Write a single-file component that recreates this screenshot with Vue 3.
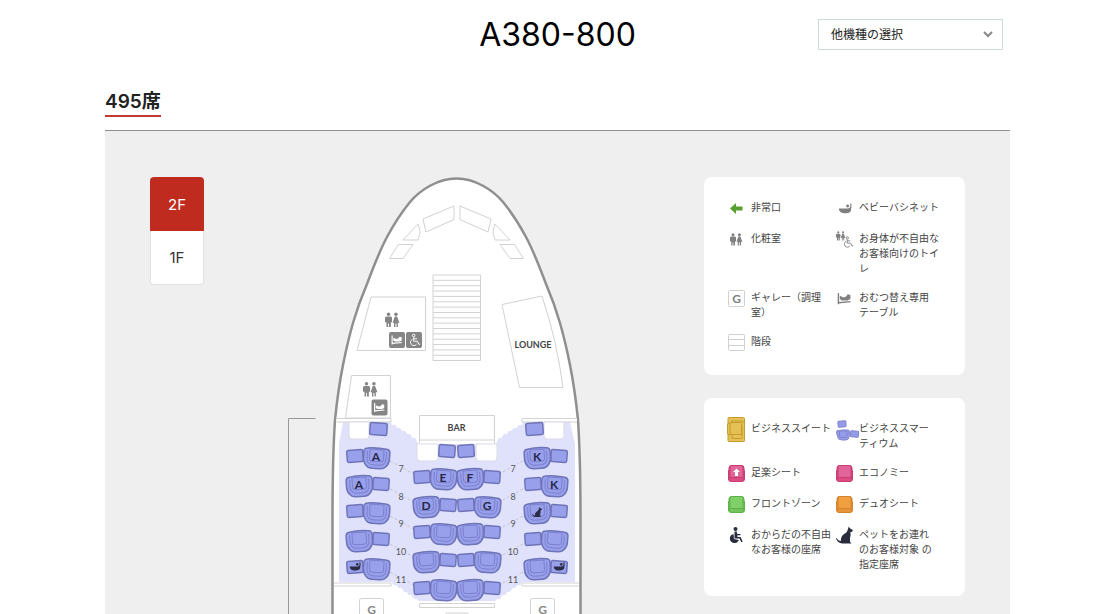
<script setup>
import { ref } from 'vue'

const floor = ref('2F')
const floors = ['2F', '1F']
const aircraft = ref('')

const facilities = [
  { icon: 'exit', label: '非常口' },
  { icon: 'bassinet', label: 'ベビーバシネット' },
  { icon: 'toilet', label: '化粧室' },
  { icon: 'toilet-access', label: 'お身体が不自由な\nお客様向けのトイ\nレ' },
  { icon: 'galley', label: 'ギャレー（調理\n室）' },
  { icon: 'changing', label: 'おむつ替え専用\nテーブル' },
  { icon: 'stairs', label: '階段' }
]

const seatTypes = [
  { icon: 'suite', label: 'ビジネススイート' },
  { icon: 'smartium', label: 'ビジネススマー\nティウム' },
  { icon: 'seat', color: 'pink', arrow: true, label: '足楽シート' },
  { icon: 'seat', color: 'pink', label: 'エコノミー' },
  { icon: 'seat', color: 'green', label: 'フロントゾーン' },
  { icon: 'seat', color: 'orange', label: 'デュオシート' },
  { icon: 'wheelchair', label: 'おからだの不自由\nなお客様の座席' },
  { icon: 'dog', label: 'ペットをお連れ\nのお客様対象 の\n指定座席' }
]

// x / y of the pair, big = which side the wide seat is on
const columns = [
  { x: 346, y: 447, big: 'right', letters: ['A', 'A'] },
  { x: 413, y: 468, big: 'right', letters: ['E', 'D'] },
  { x: 457, y: 468, big: 'left', letters: ['F', 'G'] },
  { x: 524, y: 447, big: 'left', letters: ['K', 'K'] }
]
const rows = [7, 8, 9, 10, 11]
const rowOffset = [0, 28, 55, 83, 111]

const pairs = []
columns.forEach((col, c) => {
  rows.forEach((row, i) => {
    const bigRight = (col.big === 'right') === (i % 2 === 0)
    pairs.push({
      key: `${c}-${row}`,
      x: col.x,
      y: col.y + rowOffset[i],
      bigRight,
      letter: col.letters[i] || '',
      dog: c === 3 && row === 9,
      bassinet: (c === 0 || c === 3) && row === 11
    })
  })
})

const bigTransform = (p) =>
  p.bigRight ? `translate(${p.x + 17} ${p.y}) rotate(4 13 11)` : `translate(${p.x} ${p.y}) rotate(-4 13 11)`
const smallTransform = (p) =>
  p.bigRight ? `translate(${p.x + 1} ${p.y + 3}) rotate(-4 8 6)` : `translate(${p.x + 27} ${p.y + 3}) rotate(4 8 6)`
const centerX = (p) => (p.bigRight ? p.x + 30 : p.x + 13)
</script>

<template>
  <div class="page">
    <header class="header">
      <h1>A380-800</h1>
      <div class="select-bloc">
        <select v-model="aircraft" aria-label="他機種の選択">
          <option value="">他機種の選択</option>
          <option value="a350">A350-900</option>
        </select>
        <svg class="chevron" viewBox="0 0 10 7"><path d="M1 1l4 4 4-4" /></svg>
      </div>
    </header>

    <h2>495席</h2>

    <main class="panel">
      <div class="floors">
        <button v-for="f in floors" :key="f" type="button" :class="{ active: f === floor }" @click="floor = f">
          {{ f }}
        </button>
      </div>

      <svg class="plane" viewBox="204 177 500 437">
        <defs>
          <symbol id="i-people" viewBox="0 0 16 16" overflow="visible">
            <circle cx="4" cy="1.500" r="2" />
            <path d="M2 4h4q2 0 2 1.700v5H6.700V16H4.500v-4h-1v4H1.700v-5.300H0v-5Q0 4 2 4z" />
            <circle cx="12.500" cy="1.500" r="2" />
            <path d="M11.200 4h2.600l2.700 7h-1.800v5h-1.600v-4h-1.200v4h-1.600v-5H8.600z" />
          </symbol>
          <symbol id="i-table" viewBox="0 0 16 16" overflow="visible">
            <path d="M1.500 2v12M1.500 12.500l13-1.200" fill="none" stroke="currentColor" stroke-width="1.500" />
            <path d="M3 5l4 1.800 2.500-.8 2-2.500 2.800.8v4.200l-3 1.500H5l-2-1.500z" />
          </symbol>
          <symbol id="i-wheel" viewBox="0 0 16 16" overflow="visible">
            <g fill="none" stroke="currentColor" stroke-width="1.200">
              <circle cx="7" cy="2.500" r="1.600" />
              <path d="M7 4.500v5h4.500l2 4 1.500-.6M7 6.500h4M5.500 7.200a4 4 0 1 0 5 5.800" />
            </g>
          </symbol>
          <symbol id="i-bassinet" viewBox="0 0 16 16" overflow="visible">
            <path d="M1 8.500h10.500L15 6.500V10c0 2.700-2.500 4-6.500 4S1 12.500 1 8.500z" />
            <circle cx="11" cy="5.800" r="1.700" />
            <path d="M14 2.500l1.300.5V8H14z" />
          </symbol>
          <symbol id="i-dog" viewBox="0 0 16 16" overflow="visible">
            <path d="M12 0l1 1.700 2.800 1.500-.3 1.600-2 .6c.5 2 .3 3.800-.3 5.200v3.800l1.400 1.500H6C3 15.700.8 14 0 11l.6-.2c1 1.800 2.300 2.700 4 2.900-.2-3.700 1.400-5.700 3.700-7.100 2-1.200 2.500-2.600 3-4.600z" />
          </symbol>
          <symbol id="i-big" viewBox="0 0 27 22" overflow="visible">
            <path class="seat-shape" d="M4 1.500Q13 0 23 1.500q3.500.5 3.500 3.500v6q0 5-3 8-2 2.500-6 2.500h-8q-4 0-6-2.500-3-3-3-8V5Q.5 2 4 1.500z" />
            <path class="seat-shape thin" d="M4 4.500v7q0 3 2 5 1.500 1.500 4 1.500h7q2.500 0 4-1.500 2-2 2-5v-7" />
            <path class="seat-shape thin" d="M6.500 2.500h14v9q0 3-3 3h-8q-3 0-3-3z" />
          </symbol>
        </defs>

        <path
          class="hull"
          d="M332.500 624V520C332.500 485 333 450 335 420C337 400 340 380 343 365C346 350 349 337 353 323C357 309 361 298 367 284C373 268 379 252 387 237C394 224 401 213 410 202C420 190 438 178.500 456.500 178.500C475 178.500 493 190 503 202C512 213 519 224 526 237C534 252 540 268 546 284C552 298 556 309 560 323C564 337 567 350 570 365C573 380 576 400 578 420C580 450 580.500 485 580.500 520V624"
        />

        <!-- cockpit, stairs, rooms -->
        <g class="line">
          <path d="M423 219l31-13v13.500L426 232zM460 206l31 13-3 13-28-12.500z" />
          <path d="M403 240l15-16q2 5 2 9l-2 7zM510 240l-15-16q-2 5-2 9l2 7z" />
          <path d="M389.500 258.500l9-14H413l-10 14zM523.500 258.500l-9-14H500l10 14z" />
          <path d="M433 275h47.500v85.500H433z" />
          <path v-for="n in 15" :key="n" :d="`M433 ${275 + n * 5.35}h47.500`" />
          <path d="M371 297h54.500v53.500H357zM351.500 375.500h39V418H345.500z" />
          <path d="M502 304.500l40-8.500q15 45 21 91.500h-43.500z" />
        </g>

        <!-- cabin -->
        <path
          class="cabin"
          d="M343 422h48l1 3q4-1 5 3q4-1 5 3q4-1 5 3q4-1 5 4q4-1 5 4l2 2h76l2-2q1-5 5-4q1-5 5-4q1-4 5-3q1-4 5-3q1-4 5-3l1-3h47l5 22v138h-53q-1 4-5 3q-1 4-5 3q-1 5-5 4q-1 4-5 3q-1 5-5 4l-2 2h-76l-2-2q-4 1-5-4q-4 1-5-3q-4 1-5-4q-4 1-5-3q-4 1-5-3h-53V444z"
        />
        <g class="line">
          <path d="M336.500 418.500H391v3.500h-54M577 418.500H522v3.500h55M419.500 415.500h75v24.500h-75zM419.500 443V440M494.500 443V440" />
          <path d="M334 583h57v3h-57M579 583h-57v3h57" />
          <path d="M419.500 603.500h75v4h-75zM446 617v-4h22v4" />
        </g>
        <g class="blank">
          <path d="M349 422h20v14q0 3-3 3h-14q-3 0-3-3zM544 422h20v14q0 3-3 3h-14q-3 0-3-3z" />
          <path d="M417 444h21v14q0 3-3 3h-15q-3 0-3-3zM476 444h21v14q0 3-3 3h-15q-3 0-3-3z" />
        </g>
        <path class="bracket" d="M315.500 418.500h-27V624" />

        <g class="link">
          <template v-for="(row, i) in rows" :key="row">
            <path :d="`M390 ${461 + rowOffset[i]}l24 13M523 ${461 + rowOffset[i]}l-24 13`" />
          </template>
        </g>
        <g class="row-no">
          <template v-for="(row, i) in rows" :key="row">
            <text x="401" :y="472 + rowOffset[i]">{{ row }}</text>
            <text x="513" :y="472 + rowOffset[i]">{{ row }}</text>
          </template>
        </g>

        <g class="seat-shape">
          <rect x="370" y="423" width="17" height="12" rx="1.500" transform="rotate(4 378 429)" />
          <rect x="526" y="423" width="17" height="12" rx="1.500" transform="rotate(-4 534 429)" />
          <rect x="439" y="445" width="16" height="12" rx="1.500" transform="rotate(4 447 451)" />
          <rect x="458" y="445" width="16" height="12" rx="1.500" transform="rotate(-4 466 451)" />
        </g>
        <g v-for="p in pairs" :key="p.key">
          <rect class="seat-shape" width="16" height="12" rx="1.500" :transform="smallTransform(p)" />
          <use href="#i-big" width="27" height="22" :transform="bigTransform(p)" />
          <text v-if="p.letter" class="letter" :x="centerX(p)" :y="p.y + 14">{{ p.letter }}</text>
          <use v-if="p.dog" class="ink" href="#i-dog" :x="p.x + 8" :y="p.y + 5" width="10" height="10" />
          <use
            v-if="p.bassinet"
            class="ink"
            href="#i-bassinet"
            :x="p.bigRight ? p.x + 3 : p.x + 29"
            :y="p.y + 2"
            width="12"
            height="12"
          />
        </g>

        <g class="symbols">
          <use href="#i-people" x="385" y="313" width="14" height="14" />
          <use href="#i-people" x="363" y="382.500" width="14" height="14" />
          <rect x="389" y="332" width="16" height="16" rx="2" />
          <rect x="406" y="332" width="16" height="16" rx="2" />
          <rect x="371.500" y="399.500" width="16" height="16" rx="2" />
          <g class="inverse">
            <use href="#i-table" x="391" y="334" width="12" height="12" />
            <use href="#i-wheel" x="408" y="333.500" width="13" height="13" />
            <use href="#i-table" x="373.500" y="401.500" width="12" height="12" />
          </g>
        </g>
        <text class="room" x="533" y="348">LOUNGE</text>
        <text class="room" x="456.500" y="431">BAR</text>
        <g class="line">
          <rect x="359.500" y="598.500" width="24" height="24" rx="2" />
          <rect x="530.500" y="598.500" width="24" height="24" rx="2" />
        </g>
        <text class="galley" x="371.500" y="614">G</text>
        <text class="galley" x="542.500" y="614">G</text>
      </svg>

      <aside class="legends">
        <ul v-for="(list, n) in [facilities, seatTypes]" :key="n" class="legend">
          <li v-for="item in list" :key="item.label">
            <svg class="icon" viewBox="0 0 24 24">
              <path v-if="item.icon === 'exit'" class="exit" d="M6 12.500L12 7v3.500h6.500v4H12V18z" />
              <use v-else-if="item.icon === 'bassinet'" href="#i-bassinet" x="6" y="5" width="14" height="14" />
              <use v-else-if="item.icon === 'toilet'" href="#i-people" x="6" y="6.500" width="12" height="12" />
              <g v-else-if="item.icon === 'toilet-access'">
                <use href="#i-people" x="4" y="4" width="9" height="10" />
                <use href="#i-wheel" x="10" y="9" width="12" height="12" />
              </g>
              <g v-else-if="item.icon === 'galley'">
                <rect class="box" x="4.500" y="4.500" width="16" height="16" rx="1" />
                <text x="12.500" y="17">G</text>
              </g>
              <use v-else-if="item.icon === 'changing'" href="#i-table" x="5" y="5" width="15" height="15" />
              <g v-else-if="item.icon === 'stairs'" class="box">
                <rect x="4.500" y="4.500" width="16" height="16" rx="1" />
                <path d="M4.500 9.500h16M4.500 15.500h16" />
              </g>
              <g v-else-if="item.icon === 'suite'" class="gold">
                <rect x="4" y="0.500" width="16.500" height="24" rx="1" />
                <path d="M7.500 5.500V4h11.500v2M8 17v4.500h10V17" />
                <rect x="3.500" y="6.500" width="3.500" height="11" rx="1" />
                <rect x="6" y="5.500" width="11.500" height="12" rx="1" />
                <path d="M8 17.500h10V8" fill="none" />
              </g>
              <g v-else-if="item.icon === 'smartium'" class="smartium">
                <rect x="6" y="4" width="8" height="6" rx="1" transform="rotate(-4 9 7)" />
                <rect x="18.500" y="14" width="8" height="6" rx="1" transform="rotate(5 22 17)" />
                <path d="M6 13.500q5-.8 10-.5 1.500 0 1.500 2l-.5 5q-.5 3-3.500 3H10q-4 0-4.500-3.500L4.500 15q0-1.500 1.500-1.500z" />
                <path d="M7.500 14H15v5q0 1.500-1.500 1.500H9Q7.500 20.500 7.500 19z" />
              </g>
              <g v-else-if="item.icon === 'seat'" :class="['seat', item.color]">
                <path
                  class="frame"
                  d="M7.500 4.500h10q2.500 0 2.500 2.500v2.500h.5V18q0 2.500-2.500 2.500H7Q4.500 20.500 4.500 18V9.500H5V7q0-2.500 2.500-2.500z"
                />
                <path d="M7.500 4.500h10q1.500 0 1.500 2v10H6v-10q0-2 1.500-2z" />
                <path d="M6 16.500l-1 2.500M19 16.500l1 2.500" />
                <path v-if="item.arrow" class="arrow" d="M12.500 7.500l3.500 3.500h-2v4h-3v-4H9z" />
              </g>
              <g v-else-if="item.icon === 'wheelchair'" class="ink">
                <circle cx="11.500" cy="6" r="2" />
                <path d="M10.500 8.500h2.200l.5 2.500h3.300v1.300h-3.200l.2 1.700h3l2.200 4.500-1.400.7-1.800-3.700h-5z" />
                <path d="M9.500 11a4.600 4.600 0 1 0 5.300 6l-4.800-1z" />
              </g>
              <use v-else class="ink" href="#i-dog" x="4" y="3.500" width="17" height="17" />
            </svg>
            <span>{{ item.label }}</span>
          </li>
        </ul>
      </aside>
    </main>
  </div>
</template>

<style>
body {
  margin: 0;
  background: #fff;
}
</style>

<style scoped>
.page {
  display: flex;
  flex-direction: column;
  box-sizing: border-box;
  height: 100vh;
  overflow: hidden;
  padding: 19px 104px 0 105px;
  font-family: Inter, 'Noto Sans CJK JP', sans-serif;
  color: #222;
}

/* --- header --- */
.header {
  display: grid;
  grid-template-columns: 1fr auto 1fr;
  align-items: center;
}
h1 {
  grid-column: 2;
  margin: 0;
  font-size: 32px;
  line-height: 31px;
  font-weight: 400;
  color: #000;
}
.select-bloc {
  position: relative;
  justify-self: end;
  width: 185px;
  margin-right: 7px;
}
select {
  display: block;
  appearance: none;
  box-sizing: border-box;
  width: 100%;
  height: 31px;
  padding: 0 12px;
  border: 1px solid #d0dad8;
  border-radius: 0;
  background: #fff;
  font-family: inherit;
  font-size: 12px;
  color: #222;
}
.chevron {
  position: absolute;
  top: 12px;
  right: 10px;
  width: 10px;
  height: 7px;
  fill: none;
  stroke: #888;
  stroke-width: 2;
  pointer-events: none;
}
h2 {
  align-self: flex-start;
  margin: 42px 0 13px;
  padding-bottom: 3px;
  border-bottom: 2px solid #c23b2e;
  font-size: 19px;
  line-height: 20px;
  font-weight: 600;
}

/* --- panel --- */
.panel {
  display: flex;
  flex: 1 0 auto;
  align-items: flex-start;
  padding: 46px 45px 0;
  border-top: 1px solid #8c8f90;
  background: #efefef;
}
.floors {
  display: flex;
  flex-direction: column;
  flex: none;
  width: 54px;
}
.floors button {
  height: 54px;
  padding: 0;
  border: 1px solid #e2e2e2;
  border-top: none;
  border-radius: 0 0 4px 4px;
  background: #fff;
  font-family: inherit;
  font-size: 15px;
  color: #333;
  cursor: pointer;
}
.floors .active {
  border: none;
  border-radius: 4px 4px 0 0;
  background: #c02b1f;
  color: #fff;
}

/* --- plane --- */
.plane {
  display: block;
  flex: 1;
  min-width: 0;
  font-family: Lato, sans-serif;
  text-anchor: middle;
}
.hull {
  fill: #fff;
  stroke: #8f8f8f;
  stroke-width: 2.5;
}
.line {
  fill: #fff;
  stroke: #d2d2d2;
  stroke-width: 1;
}
.cabin {
  fill: #e0e2fb;
}
.blank {
  fill: #fff;
  stroke: #d9d9e4;
}
.bracket {
  fill: none;
  stroke: #999;
}
.link {
  stroke: #c3c3cd;
  stroke-dasharray: 3 2;
}
.row-no {
  font-size: 9px;
  fill: #555;
  stroke: #e0e2fb;
  stroke-width: 3;
  paint-order: stroke;
}
.seat-shape {
  fill: #99a0eb;
  stroke: #6f74b8;
  stroke-width: 1.5;
}
.seat-shape.thin {
  stroke: #7b81ce;
  stroke-width: 1;
}
.letter {
  font-size: 12px;
  font-weight: 700;
  fill: #26284a;
}
.symbols {
  fill: #858585;
  color: #858585;
}
.inverse {
  fill: #fff;
  color: #fff;
}
.ink {
  fill: #2a2d45;
}
.room {
  font-size: 9px;
  font-weight: 700;
  fill: #444;
}
.galley {
  font-size: 12px;
  font-weight: 700;
  fill: #888;
}

/* --- legends --- */
.legends {
  display: flex;
  flex-direction: column;
  flex: none;
  gap: 23px;
  width: 261px;
}
.legend {
  display: grid;
  grid-template-columns: 108px 108px;
  row-gap: 14px;
  margin: 0;
  padding: 23px 20px 24px;
  border-radius: 8px;
  background: #fff;
  list-style: none;
}
.legend li {
  display: flex;
  align-items: flex-start;
  gap: 3px;
  min-height: 17px;
  font-size: 10px;
  line-height: 15px;
  color: #444;
}
.legend span {
  white-space: pre;
}
.icon {
  flex: none;
  width: 24px;
  height: 24px;
  margin: -4px 0;
  overflow: visible;
  fill: #808080;
  color: #808080;
}
.icon text {
  font-family: Lato, sans-serif;
  font-size: 12px;
  font-weight: 700;
  text-anchor: middle;
}
.icon .exit {
  fill: #57a030;
}
.box {
  fill: #fff;
  stroke: #d0d0d0;
}
.gold {
  fill: #e5c052;
  stroke: #c49c30;
}
.smartium {
  fill: #959be8;
  stroke: #8086ce;
}
.seat.pink {
  fill: #e2659a;
  stroke: #c93c72;
}
.seat.pink .frame {
  fill: #dc4b81;
}
.seat.green {
  fill: #80d069;
  stroke: #5fb04d;
}
.seat.green .frame {
  fill: #72c45c;
}
.seat.orange {
  fill: #f0a041;
  stroke: #d5822d;
}
.seat.orange .frame {
  fill: #e79338;
}
.seat .arrow {
  fill: #fff;
  stroke: none;
}
.icon .ink {
  fill: #2a2d3d;
}
</style>
